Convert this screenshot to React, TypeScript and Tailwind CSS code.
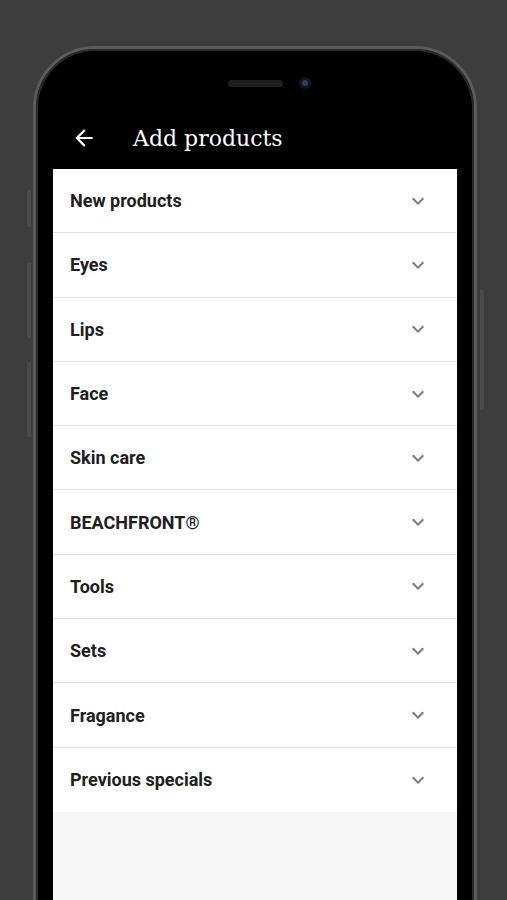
import React from 'react';

const categories = [
  'New products',
  'Eyes',
  'Lips',
  'Face',
  'Skin care',
  'BEACHFRONT®',
  'Tools',
  'Sets',
  'Fragance',
  'Previous specials',
];

const ChevronDown: React.FC = () => (
  <svg width="24" height="24" viewBox="0 0 24 24" fill="#7a7a7a">
    <path d="M16.59 8.59L12 13.17 7.41 8.59 6 10l6 6 6-6z" />
  </svg>
);

const BackArrow: React.FC = () => (
  <svg width="26" height="26" viewBox="0 0 24 24" fill="#ffffff">
    <path d="M20 11H7.83l5.59-5.59L12 4l-8 8 8 8 1.41-1.41L7.83 13H20v-2z" />
  </svg>
);

const CategoryRow: React.FC<{ label: string; last: boolean }> = ({ label, last }) => (
  <div
    className={`flex h-[64.3px] items-center justify-between pl-[17px] pr-[27px] ${
      last ? '' : 'border-b border-[#e2e2e2]'
    }`}
  >
    <span className="text-[18px] font-bold text-[#202020]">{label}</span>
    <ChevronDown />
  </div>
);

export default function App() {
  return (
    <div className="h-[900px] w-[507px] overflow-hidden bg-[#3d3d3d] pl-[33px] pt-[46px]">
      <div className="relative h-[900px] w-[444px] rounded-t-[62px] border-[3px] border-[#5b5b5b] bg-black px-[17px] shadow-[inset_0_0_0_2px_#2a2a2a]">
        {/* side buttons */}
        <div className="absolute left-[-9px] top-[141px] h-[37px] w-[4px] rounded-l-[2px] bg-[#4c4c4c]" />
        <div className="absolute left-[-9px] top-[214px] h-[75px] w-[4px] rounded-l-[2px] bg-[#4c4c4c]" />
        <div className="absolute left-[-9px] top-[313px] h-[75px] w-[4px] rounded-l-[2px] bg-[#4c4c4c]" />
        <div className="absolute right-[-10px] top-[241px] h-[120px] w-[4px] rounded-r-[2px] bg-[#4c4c4c]" />

        {/* speaker + camera */}
        <div className="mt-[28px] flex h-[12px] items-center justify-center gap-[16px] pl-[28px]">
          <div className="h-[7px] w-[55px] rounded-full bg-[#1e1e1e]" />
          <div className="flex h-[12px] w-[12px] items-center justify-center rounded-full bg-[#111522]">
            <div className="h-[6px] w-[6px] rounded-full bg-[#2b3a6b]" />
          </div>
        </div>

        {/* header */}
        <div className="flex h-[80px] items-center pt-[18px]">
          <div className="ml-[18px] flex items-center">
            <BackArrow />
          </div>
          <h1
            className="ml-[36px] text-[22px] text-white"
            style={{ fontFamily: '"DejaVu Serif", serif' }}
          >
            Add products
          </h1>
        </div>

        {/* list */}
        <div
          className="flex h-[731px] flex-col bg-[#f7f7f7]"
          style={{ fontFamily: 'Roboto, "Liberation Sans", sans-serif' }}
        >
          <div className="bg-white">
            {categories.map((c, i) => (
              <CategoryRow key={c} label={c} last={i === categories.length - 1} />
            ))}
          </div>
        </div>
      </div>
    </div>
  );
}
